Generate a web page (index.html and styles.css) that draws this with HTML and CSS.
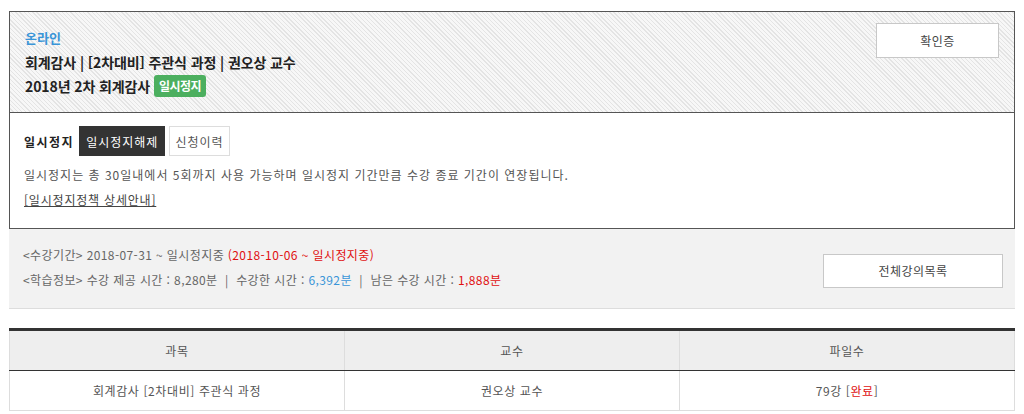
FILE: index.html
```html
<!DOCTYPE html>
<html lang="ko">
<head>
<meta charset="utf-8">
<link rel="stylesheet" href="styles.css">
</head>
<body>
<div class="page">
  <div class="course-box">
    <div class="course-head">
      <div class="head-text">
        <div class="type">온라인</div>
        <div class="title">회계감사 | [2차대비] 주관식 과정 | 권오상 교수</div>
        <div class="title">2018년 2차 회계감사 <span class="badge">일시정지</span></div>
      </div>
      <button class="btn btn-cert">확인증</button>
    </div>
    <div class="pause-box">
      <div class="pause-row">
        <span class="pause-label">일시정지</span>
        <button class="btn-dark">일시정지해제</button>
        <button class="btn-light">신청이력</button>
      </div>
      <p class="pause-desc">일시정지는 총 30일내에서 5회까지 사용 가능하며 일시정지 기간만큼 수강 종료 기간이 연장됩니다.</p>
      <div class="pause-link-row"><a class="pause-link" href="#">[일시정지정책 상세안내]</a></div>
    </div>
  </div>
  <div class="info-box">
    <div class="info-text">
      <div>&lt;수강기간&gt; 2018-07-31 ~ 일시정지중 <span class="red">(2018-10-06 ~ 일시정지중)</span></div>
      <div>&lt;학습정보&gt; 수강 제공 시간 : 8,280분 &nbsp;| &nbsp;수강한 시간 : <span class="blue">6,392분</span> &nbsp;| &nbsp;남은 수강 시간 : <span class="red">1,888분</span></div>
    </div>
    <button class="btn btn-list">전체강의목록</button>
  </div>
  <table class="lecture-table">
    <thead>
      <tr><th>과목</th><th>교수</th><th>파일수</th></tr>
    </thead>
    <tbody>
      <tr><td>회계감사 [2차대비] 주관식 과정</td><td>권오상 교수</td><td>79강 [<span class="red">완료</span>]</td></tr>
    </tbody>
  </table>
</div>
</body>
</html>
```
FILE: styles.css
```css
* { box-sizing: border-box; }
body {
  margin: 0;
  font-family: "Noto Sans CJK KR", "Noto Sans", sans-serif;
  font-size: 12px;
  color: #555;
  background: #fff;
}
.page {
  padding: 11px 9px 0 9px;
  width: 1024px;
}
.course-box {
  border: 1px solid #555;
}
.course-head {
  display: flex;
  justify-content: space-between;
  align-items: flex-start;
  padding: 14px 15px 14px 15px;
  background: repeating-linear-gradient(45deg, #f7f7f7 0 2px, #e4e4e4 2px 3px);
  border-bottom: 1px solid #555;
}
.head-text { line-height: 24px; }
.type {
  color: #3a95d8;
  font-size: 13px;
  font-weight: 700;
}
.title {
  color: #222;
  font-size: 14px;
  font-weight: 700;
  letter-spacing: -0.1px;
}
.badge {
  display: inline-block;
  background: #4caf5f;
  color: #fff;
  font-size: 12px;
  font-weight: 700;
  line-height: 22px;
  padding: 0 5px;
  border-radius: 3px;
  margin-left: 0;
  letter-spacing: -0.5px;
  vertical-align: 1px;
}
.btn {
  font-family: inherit;
  background: #fff;
  border: 1px solid #c8c8c8;
  color: #444;
  font-size: 12px;
  letter-spacing: 0.5px;
  cursor: pointer;
}
.btn-cert {
  width: 123px;
  height: 35px;
  margin-top: -3px;
}
.pause-box {
  padding: 13px 14px 16px 14px;
}
.pause-row {
  display: flex;
  align-items: center;
  gap: 4px;
  height: 30px;
}
.pause-label {
  color: #222;
  font-weight: 700;
  letter-spacing: 1.5px;
  margin-right: 1px;
}
.btn-dark, .btn-light {
  font-family: inherit;
  font-size: 12px;
  height: 30px;
  padding: 0 6px;
  letter-spacing: 1px;
  cursor: pointer;
}
.btn-dark {
  background: #333;
  border: 1px solid #333;
  color: #fff;
}
.btn-light {
  background: #fff;
  border: 1px solid #ddd;
  color: #555;
  padding: 0 5px;
}
.pause-desc {
  margin: 7px 0 0 0;
  line-height: 24px;
  letter-spacing: 1px;
}
.pause-link-row {
  line-height: 24px;
  margin-top: 1px;
}
.pause-link {
  color: #444;
  letter-spacing: 0.8px;
  text-decoration: underline;
}
.info-box {
  display: flex;
  justify-content: space-between;
  align-items: center;
  background: #f2f2f2;
  border-bottom: 1px solid #ddd;
  padding: 13px 12px 16px 14px;
}
.info-text {
  line-height: 25px;
  color: #666;
  letter-spacing: 0.4px;
}
.red { color: #e01010; }
.blue { color: #3a95d8; }
.btn-list {
  width: 180px;
  height: 34px;
  margin-top: 7px;
}
.lecture-table {
  width: 1006px;
  margin-top: 19px;
  border-collapse: collapse;
  border-top: 3px solid #333;
  table-layout: fixed;
}
.lecture-table th, .lecture-table td {
  text-align: center;
  font-size: 12px;
  color: #555;
  letter-spacing: 0.6px;
  border-left: 1px solid #ddd;
  border-right: 1px solid #ddd;
}
.lecture-table th {
  background: #eee;
  font-weight: 400;
  height: 41px;
  border-bottom: 1px solid #333;
}
.lecture-table td {
  height: 40px;
  border-bottom: 1px solid #ddd;
}
```
